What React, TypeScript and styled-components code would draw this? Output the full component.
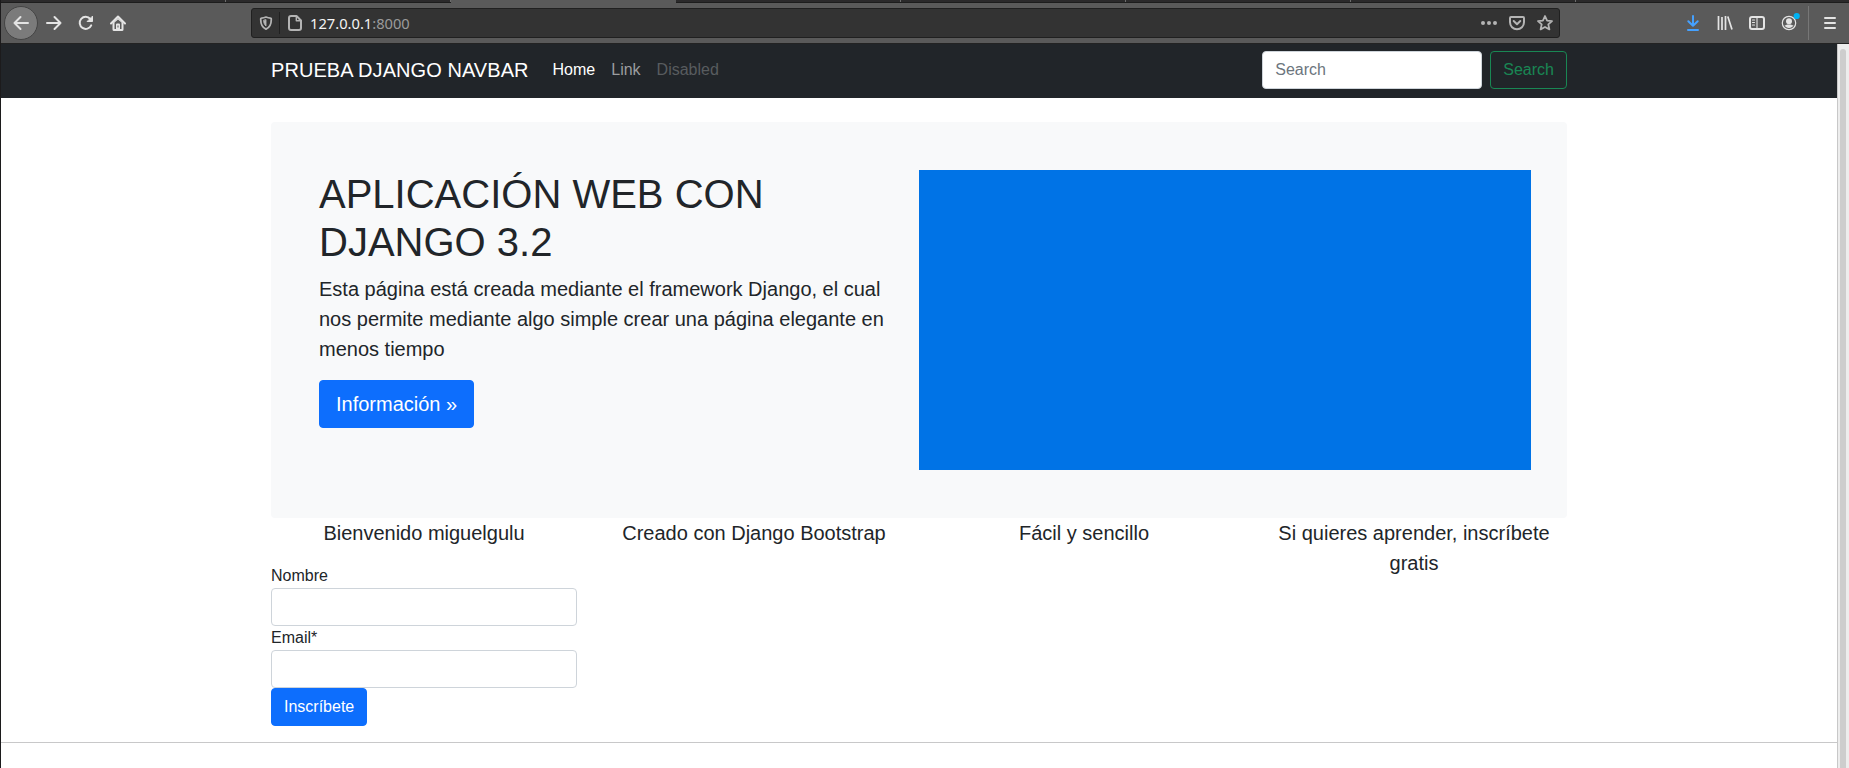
import React from "react";
import styled, { createGlobalStyle, css } from "styled-components";

const Global = createGlobalStyle`
  *, *::before, *::after { box-sizing: border-box; }
  body {
    margin: 0;
    background: #fff;
    color: #212529;
    font: 400 16px/1.5 "Liberation Sans", Arial, sans-serif;
    overflow: hidden;
  }
  h1, p { margin: 0; }
`;

const Window = styled.div`
  height: 768px;
  display: flex;
  flex-direction: column;
  border-left: 1px solid #1c1b1c;
  overflow: hidden;
`;

const TabStrip = styled.div`
  display: flex;
  flex: 0 0 3px;
  background: #2b2a2b;
  border-bottom: 1px solid #1d1d1d;
`;

const Tab = styled.div<{ $active?: boolean }>`
  flex: 0 0 225px;
  margin-bottom: ${(p) => (p.$active ? "-1px" : "0")};
  background: ${(p) => (p.$active ? "#5a5a5a" : "transparent")};
  border-right: 1px solid ${(p) => (p.$active ? "#5a5a5a" : "#6c6c6c")};
`;

const Toolbar = styled.div`
  display: flex;
  flex: 0 0 41px;
  align-items: center;
  background: #5a5a5a;
  border-bottom: 1px solid #232323;
  color: #e4e4e4;
  padding: 0 3px;
`;

const BackButton = styled.div`
  display: flex;
  align-items: center;
  justify-content: center;
  width: 34px;
  height: 34px;
  border-radius: 50%;
  background: #7b7b7b;
  border: 1px solid #444;
`;

const ToolButton = styled.div<{ $color?: string }>`
  display: flex;
  align-items: center;
  justify-content: center;
  width: 32px;
  height: 32px;
  color: ${(p) => p.$color ?? "inherit"};
  svg { overflow: visible; }
`;

const UrlBar = styled.div`
  display: flex;
  align-items: center;
  width: 1309px;
  height: 30px;
  margin-left: 117px;
  padding: 0 6px 0 7px;
  background: #333;
  border: 1px solid #202020;
  border-radius: 3px;
  color: #b4b4b4;
`;

const UrlDivider = styled.div`
  width: 1px;
  height: 22px;
  margin: 0 7px 0 6px;
  background: #202020;
`;

const Url = styled.div`
  flex: 1;
  margin-left: 7px;
  font: 14.7px/20px "Noto Sans", sans-serif;
  color: #9b9b9b;
  b { font-weight: 400; color: #f4f4f4; }
`;

const UrlActions = styled.div`
  display: flex;
  gap: 12px;
`;

const ToolActions = styled.div`
  display: flex;
  align-items: center;
  margin-left: auto;
`;

const ToolDivider = styled.div`
  width: 1px;
  height: 34px;
  margin: 0 5px 0 3px;
  background: #777;
`;

const Viewport = styled.div`
  display: flex;
  flex: 1;
  min-height: 0;
`;

const Page = styled.div`
  flex: 1;
  min-width: 0;
`;

const Scrollbar = styled.div`
  flex: 0 0 12px;
  display: flex;
  padding: 5px 3px 0 2px;
  background: #ededed;
  border-left: 1px solid #c8c8c8;
`;

const ScrollThumb = styled.div`
  flex: 1;
  background: #cdcdcd;
  border-radius: 3px 3px 0 0;
`;

const NavBar = styled.nav`
  height: 54px;
  background: #212529;
`;

const Container = styled.div`
  width: 1320px;
  margin: 0 auto;
  padding: 0 12px;
`;

const NavRow = styled(Container)`
  display: flex;
  align-items: center;
  height: 52px;
`;

const Brand = styled.div`
  margin-right: 16px;
  font-size: 20px;
  line-height: 30px;
  letter-spacing: 0.06px;
  color: #fff;
`;

const NavLink = styled.a<{ $tone: string }>`
  padding: 8px;
  line-height: 24px;
  color: ${(p) => p.$tone};
`;

const SearchForm = styled.div`
  display: flex;
  gap: 8px;
  margin-left: auto;
`;

const Input = styled.input`
  display: block;
  width: 100%;
  height: 38px;
  padding: 6px 12px;
  border: 1px solid #ced4da;
  border-radius: 4px;
  background: #fff;
  font: inherit;
  color: #212529;
  &::placeholder { color: #6c757d; opacity: 1; }
`;

const SearchInput = styled(Input)`
  width: 220px;
`;

const Button = styled.button<{ $outline?: boolean; $large?: boolean }>`
  display: block;
  padding: 6px 12px;
  border: 1px solid #0d6efd;
  border-radius: 4px;
  background: #0d6efd;
  color: #fff;
  font: inherit;
  line-height: 24px;
  ${(p) => p.$outline && css`
    border-color: #198754;
    background: transparent;
    color: #198754;
  `}
  ${(p) => p.$large && css`
    padding: 8px 16px;
    font-size: 20px;
    line-height: 30px;
  `}
`;

const Hero = styled.section`
  display: grid;
  grid-template-columns: 1fr 1fr;
  margin-top: 24px;
  padding: 48px 36px;
  background: #f8f9fa;
  border-radius: 4px;
`;

const HeroCopy = styled.div`
  padding: 0 12px;
`;

const Title = styled.h1`
  margin-bottom: 8px;
  font-size: 40px;
  font-weight: 400;
  line-height: 48px;
`;

const Lead = styled.p`
  margin-bottom: 16px;
  font-size: 20px;
  line-height: 30px;
`;

const HeroImage = styled.div`
  height: 300px;
  background: #0073e6;
`;

const Columns = styled.div`
  display: grid;
  grid-template-columns: repeat(4, 1fr);
  margin: 0 -12px 16px;
`;

const Column = styled.div`
  padding: 0 12px;
`;

const Caption = styled(Lead)`
  text-align: center;
`;

const Label = styled.label`
  display: block;
  line-height: 24px;
`;

const Rule = styled.div`
  height: 1px;
  background: #c8c8c9;
`;

const Icon = ({ children, size = 16 }: { children: React.ReactNode; size?: number }) => (
  <svg width={size} height={size} viewBox="0 0 16 16" fill="none" stroke="currentColor"
    strokeWidth="2" strokeLinecap="round" strokeLinejoin="round">{children}</svg>
);

export default function App() {
  return (
    <Window>
      <Global />
      <TabStrip>
        <Tab /><Tab /><Tab $active /><Tab /><Tab /><Tab /><Tab />
      </TabStrip>
      <Toolbar>
        <BackButton><Icon><path d="M15 8H1.500M7.500 2 1.500 8l6 6" /></Icon></BackButton>
        <ToolButton><Icon><path d="M1 8h13.500M8.500 2l6 6-6 6" /></Icon></ToolButton>
        <ToolButton>
          <Icon><path d="M13.200 10.300A6 6 0 1 1 12.300 4" /><path d="M14.500 1.500v5H9.500z" fill="currentColor" strokeWidth="1" /></Icon>
        </ToolButton>
        <ToolButton>
          <Icon>
            <path d="M1 8.500 8 1.500l7 7" />
            <path d="M2.500 8 8 2.800 13.500 8v6.500a1.500 1.500 0 0 1-1.500 1.500H4a1.500 1.500 0 0 1-1.500-1.500zM4.500 7.500V14H6V9.500a1 1 0 0 1 1-1h2a1 1 0 0 1 1 1V14h1.500V7.500L8 4.500zM7.500 10.500v2h1v-2z" fill="currentColor" fillRule="evenodd" stroke="none" />
          </Icon>
        </ToolButton>
        <UrlBar>
          <Icon size={14}>
            <path d="M3 2.300C5 2.300 6.500 1.800 8 1.200c1.500.6 3 1.100 5 1.100a1 1 0 0 1 1 1C14.200 8.600 12.400 13 8 15 3.600 13 1.800 8.600 2 3.300a1 1 0 0 1 1-1z" />
            <path d="M8 4.500v7C6 9.800 5.300 7.500 5.300 5.200z" fill="currentColor" strokeWidth="1" />
          </Icon>
          <UrlDivider />
          <Icon><path d="M4 1h5.500L14 5.500V13a2 2 0 0 1-2 2H4a2 2 0 0 1-2-2V3a2 2 0 0 1 2-2z" /><path d="M9.300 1.500v4.300h4.300" strokeWidth="1.400" /></Icon>
          <Url><b>127.0.0.1</b>:8000</Url>
          <UrlActions>
            <Icon><g fill="currentColor" stroke="none"><circle cx="2" cy="8" r="2" /><circle cx="8" cy="8" r="2" /><circle cx="14" cy="8" r="2" /></g></Icon>
            <Icon><path d="M2 2h12a1 1 0 0 1 1 1v4.300a7 6.900 0 0 1-14 0V3a1 1 0 0 1 1-1z" /><path d="M4.700 6 8 9.200 11.300 6" /></Icon>
            <Icon><path d="m8 1 2.100 4.600 4.900.5-3.700 3.300 1.100 5L8 12l-4.400 2.400 1.100-5L1 6.100l4.900-.5z" strokeWidth="1.800" /></Icon>
          </UrlActions>
        </UrlBar>
        <ToolActions>
          <ToolButton $color="#45a1ff"><Icon><path d="M8 1v9.500M3.300 6.200 8 10.800l4.700-4.600M3 15h10" /></Icon></ToolButton>
          <ToolButton><Icon><path d="M1.500 1v14M5 2v13M8.500 1v14M10.800 1.500l4.200 13" strokeWidth="1.700" strokeLinecap="butt" /></Icon></ToolButton>
          <ToolButton><Icon><rect x="1" y="2" width="14" height="12" rx="2" /><path d="M8 2v12M3.500 5h2M3.500 7.500h2M3.500 10h2" strokeWidth="1.100" /></Icon></ToolButton>
          <ToolButton>
            <Icon>
              <circle cx="8" cy="8" r="6.700" strokeWidth="1.200" />
              <g fill="currentColor" stroke="none"><circle cx="8" cy="6.200" r="3" /><path d="M3.500 10.300c1.200 0 2-.4 2.500-.9h4c.5.5 1.300.9 2.500.9-1 1.700-2.500 2.700-4.500 2.700s-3.500-1-4.500-2.700z" /></g>
              <circle cx="15.700" cy="1" r="3.100" fill="#00b3f4" stroke="none" />
            </Icon>
          </ToolButton>
          <ToolDivider />
          <ToolButton><Icon><path d="M3 3h10M3 8h10M3 13h10" /></Icon></ToolButton>
        </ToolActions>
      </Toolbar>
      <Viewport>
        <Page>
          <NavBar>
            <NavRow>
              <Brand>PRUEBA DJANGO NAVBAR</Brand>
              <NavLink $tone="#fff">Home</NavLink>
              <NavLink $tone="#9b9d9f">Link</NavLink>
              <NavLink $tone="#585c5f">Disabled</NavLink>
              <SearchForm>
                <SearchInput placeholder="Search" />
                <Button $outline>Search</Button>
              </SearchForm>
            </NavRow>
          </NavBar>
          <Container>
            <Hero>
              <HeroCopy>
                <Title>APLICACIÓN WEB CON DJANGO 3.2</Title>
                <Lead>Esta página está creada mediante el framework Django, el cual nos permite mediante algo simple crear una página elegante en menos tiempo</Lead>
                <Button $large>Información »</Button>
              </HeroCopy>
              <HeroImage />
            </Hero>
            <Columns>
              <Column>
                <Caption>Bienvenido miguelgulu</Caption>
                <Label>Nombre</Label>
                <Input />
                <Label>Email*</Label>
                <Input />
                <Button>Inscríbete</Button>
              </Column>
              <Column><Caption>Creado con Django Bootstrap</Caption></Column>
              <Column><Caption>Fácil y sencillo</Caption></Column>
              <Column><Caption>Si quieres aprender, inscríbete gratis</Caption></Column>
            </Columns>
          </Container>
          <Rule />
        </Page>
        <Scrollbar><ScrollThumb /></Scrollbar>
      </Viewport>
    </Window>
  );
}
